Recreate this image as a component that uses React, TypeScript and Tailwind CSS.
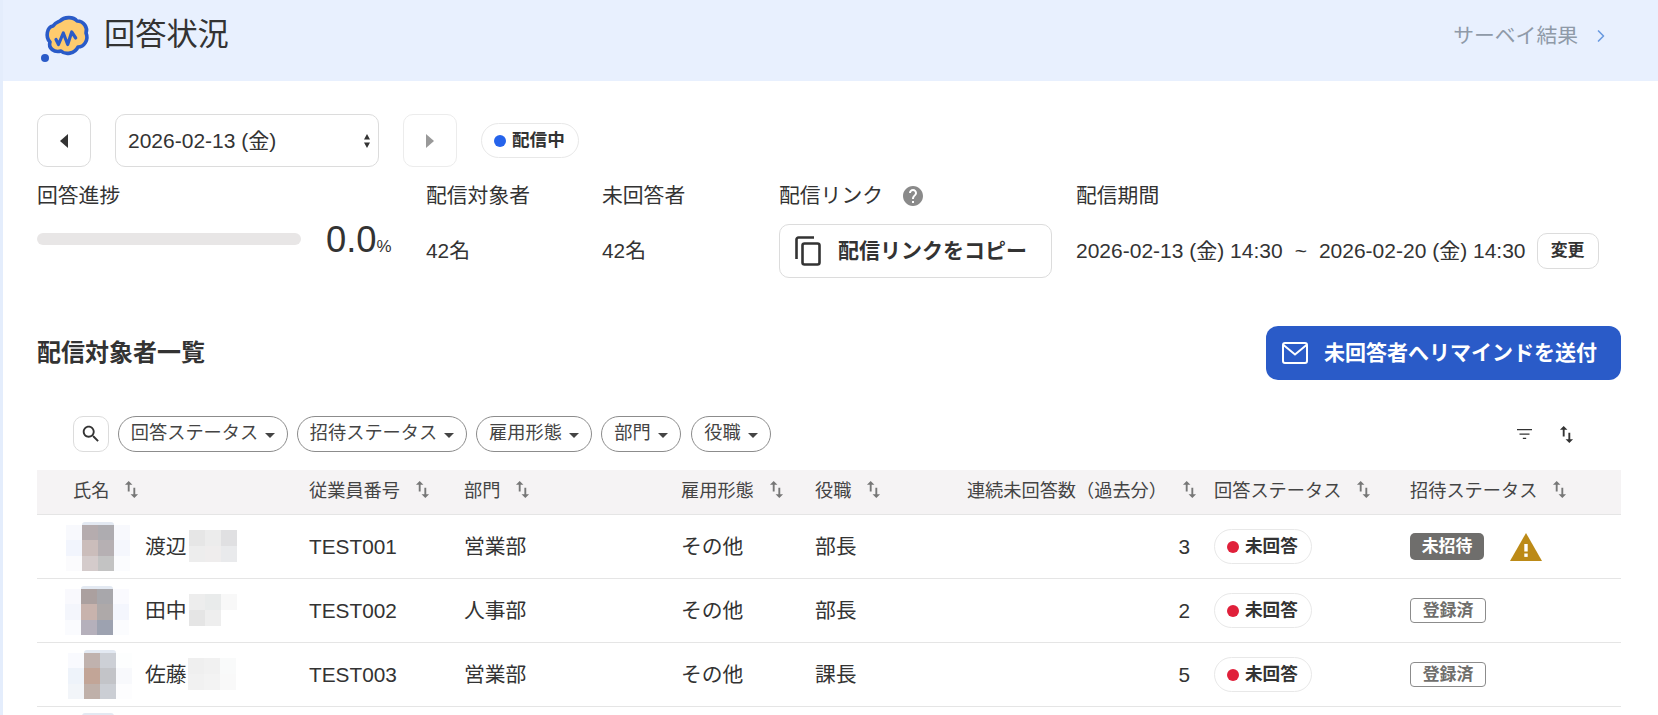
import { ChevronRight } from 'lucide-react';

const font = { fontFamily: '"Liberation Sans", "Noto Sans CJK JP", sans-serif' };

// 回答者データ（写真・名前はモザイク表現）
const respondents = [
  {
    id: 'TEST001', family: '渡辺', dept: '営業部', type: 'その他', role: '部長', count: 3, invite: 'none',
    avatarClass: 'ml-[29px]', blurClass: 'ml-[2px]',
    avatar: ['#f8f9fd', '#b5acae', '#aeacb0', '#f8f9fd', '#f2f5fd', '#cbbdbb', '#b6b0b3', '#f5f7fd', '#fbfbfd', '#d4cbcb', '#c3c3c3', '#fbfcfe'],
    blur: ['#e6e6e6', '#ececec', '#e0e0e2', '#ededed', '#efeded', '#e9eaec'],
  },
  {
    id: 'TEST002', family: '田中', dept: '人事部', type: 'その他', role: '部長', count: 2, invite: 'done',
    avatarClass: 'ml-[28px]', blurClass: 'ml-[2px]',
    avatar: ['#f9f9fd', '#aba09f', '#a8a7ab', '#fafafe', '#f4f6fc', '#c8b3ad', '#aea9a9', '#f4f6fd', '#fafbfe', '#b5b0bb', '#9da2b0', '#fbfcfe'],
    blur: ['#ededed', '#e9ebeb', '#f8f8f8', '#e5e5e5', '#eeeeee', '#ffffff'],
  },
  {
    id: 'TEST003', family: '佐藤', dept: '営業部', type: 'その他', role: '課長', count: 5, invite: 'done',
    avatarClass: 'ml-[31px]', blurClass: 'ml-[1px]',
    avatar: ['#f9fafe', '#c0b2ae', '#cdd0d6', '#fdfefe', '#eef3fa', '#c2a597', '#c3c4c8', '#f8f9fc', '#f2f5f9', '#bfb0a9', '#cbced4', '#fdfdfe'],
    blur: ['#efefef', '#f1f1f1', '#f9fafa', '#f1f1f1', '#f3f3f3', '#f9f9f9'],
  },
];

const rowGrid = 'grid grid-cols-[272px_155px_217px_134px_151px_248px_196px_211px] items-center';

function SortIcon({ className }: { className: string }) {
  return (
    <svg viewBox="4 2 16 20" className={className} fill="currentColor">
      <path d="M16 17.01V10h-2v7.01h-3L15 21l4-3.99h-3zM9 3L5 6.99h3V14h2V6.99h3L9 3z" />
    </svg>
  );
}

function Caret() {
  return (
    <svg viewBox="0 0 10 5" className="w-[10px] h-[5px] ml-[7px] mt-[2px] text-[#444]" fill="currentColor">
      <path d="M0 0h10L5 5z" />
    </svg>
  );
}

function FilterChip({ label, className }: { label: string; className: string }) {
  return (
    <div className={`h-[36px] rounded-full border border-[#8c8c8c] flex items-center justify-center text-[18.2px] text-[#444] ${className}`}>
      {label}
      <Caret />
    </div>
  );
}

function HeadCell({ label, className = '' }: { label: string; className?: string }) {
  return (
    <div className={`flex items-center gap-[15px] text-[18.2px] text-[#444] ${className}`}>
      <span>{label}</span>
      <SortIcon className="w-[15px] h-[19px] text-[#777] -mt-[5px]" />
    </div>
  );
}

function Avatar({ colors, className }: { colors: string[]; className: string }) {
  return (
    <div className={`flex flex-col items-center w-[64px] ${className}`}>
      <div className="w-[32px] h-[3px] rounded-t-full bg-[#e3e9f2]" />
      <div className="grid grid-cols-4 w-[64px]">
        {colors.map((c, i) => (
          <div key={i} className="h-[15.4px]" style={{ backgroundColor: c }} />
        ))}
      </div>
    </div>
  );
}

function StatusPill({ children, dot }: { children: string; dot: string }) {
  return (
    <div className="inline-flex items-center h-[35px] rounded-full border border-[#e8e8e8] bg-white pl-[12px] pr-[13px] gap-[6px] text-[17.6px] font-bold text-[#333]">
      <span className={`w-[12px] h-[12px] rounded-full ${dot}`} />
      {children}
    </div>
  );
}

export default function App() {
  return (
    <div style={font} className="w-[1658px] h-[715px] overflow-hidden bg-white border-l-[3px] border-[#e4edfc] text-[#333]">
      {/* ヘッダー */}
      <div className="h-[81px] -ml-[3px] bg-[#e8f0fe] flex items-center justify-between pl-[40px] pr-[47px]">
        <div className="flex items-center gap-[12px]">
          <svg viewBox="0 0 52 50" className="w-[52px] h-[50px] -mt-[6px]">
            <path
              d="M20 8C24 4 33 3 37 8C44 8 48 15 46 20C49 27 44 34 38 34C35 41 25 42 21 38C14 40 8 35 10 29C5 24 7 14 13 13C15 10 18 9 20 8Z"
              fill="#fecb6e"
              stroke="#2a5bc8"
              strokeWidth="3.6"
              strokeLinejoin="round"
            />
            <path d="M16 26.5L18.5 31.5L23.3 20L27.7 31.5L31.7 19L35.7 25" fill="none" stroke="#2a5bc8" strokeWidth="3.2" strokeLinejoin="round" strokeLinecap="round" />
            <circle cx="5" cy="45" r="4" fill="#2a5bc8" />
          </svg>
          <h1 className="text-[31.2px] text-[#333] -mt-[10px]">回答状況</h1>
        </div>
        <div className="flex items-center gap-[13px] text-[20.8px] text-[#8f9aa8] -mt-[10px]">
          サーベイ結果
          <ChevronRight className="w-[20px] h-[20px] text-[#6a9be0]" strokeWidth={2} />
        </div>
      </div>

      <div className="pt-[33px] pl-[34px] pr-[37px]">
        {/* 日付セレクタ */}
        <div className="flex items-center">
          <button className="w-[54px] h-[53px] rounded-[10px] border border-[#dcdcdc] bg-white flex items-center justify-center">
            <svg viewBox="0 0 8 14" className="w-[8px] h-[14px]" fill="#333"><path d="M8 0v14L0 7z" /></svg>
          </button>
          <div className="w-[264px] h-[53px] ml-[24px] rounded-[10px] border border-[#dcdcdc] bg-white flex items-center justify-between pl-[12px] pr-[8px] text-[21px]">
            2026-02-13 (金)
            <svg viewBox="0 0 6 14" className="w-[6px] h-[14px]" fill="#333"><path d="M3 0l3 5.5H0zM3 14l-3-5.5h6z" /></svg>
          </div>
          <button className="w-[54px] h-[53px] ml-[24px] rounded-[10px] border border-[#ececec] bg-white flex items-center justify-center">
            <svg viewBox="0 0 8 14" className="w-[8px] h-[14px]" fill="#999"><path d="M0 0v14L8 7z" /></svg>
          </button>
          <div className="h-[35px] ml-[24px] rounded-full border border-[#e8e8e8] bg-white flex items-center pl-[12px] pr-[13px] gap-[6px] text-[17.6px] font-bold">
            <span className="w-[12px] h-[12px] rounded-full bg-[#2563eb]" />
            配信中
          </div>
        </div>

        {/* サマリー */}
        <div className="flex mt-[15px] text-[20.8px]">
          <div className="w-[389px]">
            <div className="h-[28px] leading-[28px]">回答進捗</div>
            <div className="h-[54px] mt-[14px] flex items-center">
              <div className="w-[264px] h-[12px] rounded-full bg-[#e8e6e6] mb-[24px]" />
              <div className="ml-[25px] flex items-baseline mb-[22px]">
                <span className="text-[36.4px]">0.0</span>
                <span className="text-[16.9px]">%</span>
              </div>
            </div>
          </div>
          <div className="w-[176px]">
            <div className="h-[28px] leading-[28px]">配信対象者</div>
            <div className="h-[54px] mt-[14px] flex items-center">42名</div>
          </div>
          <div className="w-[177px]">
            <div className="h-[28px] leading-[28px]">未回答者</div>
            <div className="h-[54px] mt-[14px] flex items-center">42名</div>
          </div>
          <div className="w-[297px]">
            <div className="h-[28px] flex items-center gap-[18px]">
              配信リンク
              <svg viewBox="0 0 24 24" className="w-[24px] h-[24px]" fill="#8a8a8a">
                <path d="M12 2C6.48 2 2 6.48 2 12s4.48 10 10 10 10-4.48 10-10S17.52 2 12 2zm1 17h-2v-2h2v2zm2.07-7.75l-.9.92C13.45 12.9 13 13.5 13 15h-2v-.5c0-1.1.45-2.1 1.17-2.83l1.24-1.26c.37-.36.59-.86.59-1.41 0-1.1-.9-2-2-2s-2 .9-2 2H8c0-2.21 1.79-4 4-4s4 1.79 4 4c0 .88-.36 1.68-.93 2.25z" />
              </svg>
            </div>
            <button className="w-[273px] h-[54px] mt-[14px] rounded-[10px] border border-[#dcdcdc] bg-white flex items-center pl-[15px] gap-[16px] text-[21px] font-bold">
              <svg viewBox="0 0 27 30" className="w-[27px] h-[30px]" fill="none" stroke="#333" strokeWidth="2.6">
                <path d="M19 1.5H3.5a2 2 0 0 0-2 2V23" />
                <rect x="7.5" y="7.5" width="17" height="21" rx="2" />
              </svg>
              配信リンクをコピー
            </button>
          </div>
          <div>
            <div className="h-[28px] leading-[28px]">配信期間</div>
            <div className="h-[54px] mt-[14px] flex items-center text-[21px]">
              <span>2026-02-13 (金) 14:30</span>
              <span className="mx-[12px]">~</span>
              <span>2026-02-20 (金) 14:30</span>
              <button className="w-[62px] h-[36px] ml-[11px] rounded-[10px] border border-[#dcdcdc] bg-white text-[16.9px] font-bold">変更</button>
            </div>
          </div>
        </div>

        {/* 一覧タイトル */}
        <div className="flex items-center justify-between mt-[48px] h-[54px]">
          <h2 className="text-[24px] font-bold">配信対象者一覧</h2>
          <button className="w-[355px] h-[54px] rounded-[12px] bg-[#2a5bc8] text-white text-[21px] font-bold flex items-center pl-[16px] gap-[16px]">
            <svg viewBox="0 0 26 22" className="w-[26px] h-[22px]" fill="none" stroke="#fff" strokeWidth="2">
              <rect x="1" y="1" width="24" height="20" rx="2" />
              <path d="M1.5 3L13 12.5L24.5 3" />
            </svg>
            未回答者へリマインドを送付
          </button>
        </div>

        {/* フィルター */}
        <div className="flex items-center mt-[36px] pl-[36px] pr-[47px]">
          <div className="w-[36px] h-[36px] rounded-[10px] border border-[#dcdcdc] flex items-center justify-center">
            <svg viewBox="0 0 24 24" className="w-[22px] h-[22px]" fill="#333">
              <path d="M15.5 14h-.79l-.28-.27C15.41 12.59 16 11.11 16 9.5 16 5.91 13.09 3 9.5 3S3 5.91 3 9.5 5.91 16 9.5 16c1.61 0 3.09-.59 4.23-1.57l.27.28v.79l5 4.99L20.49 19l-4.99-5zm-6 0C7.01 14 5 11.99 5 9.5S7.01 5 9.5 5 14 7.01 14 9.5 11.99 14 9.5 14z" />
            </svg>
          </div>
          <FilterChip label="回答ステータス" className="w-[170px] ml-[9px]" />
          <FilterChip label="招待ステータス" className="w-[170px] ml-[9px]" />
          <FilterChip label="雇用形態" className="w-[116px] ml-[9px]" />
          <FilterChip label="部門" className="w-[80px] ml-[9px]" />
          <FilterChip label="役職" className="w-[80px] ml-[10px]" />
          <div className="ml-auto flex items-center gap-[27px]">
            <svg viewBox="3 6 18 12" className="w-[15px] h-[12px]" fill="#333">
              <path d="M10 18h4v-1.5h-4V18zM3 6v1.5h18V6H3zm3 7h12v-1.5H6V13z" />
            </svg>
            <SortIcon className="w-[15px] h-[19px] text-[#333]" />
          </div>
        </div>

        {/* テーブル */}
        <div className="mt-[18px]">
          <div className={`${rowGrid} h-[45px] bg-[#f5f3f4] border-b border-[#e5e5e5]`}>
            <HeadCell label="氏名" className="pl-[36px]" />
            <HeadCell label="従業員番号" />
            <HeadCell label="部門" />
            <HeadCell label="雇用形態" />
            <HeadCell label="役職" />
            <HeadCell label="連続未回答数（過去分）" className="justify-end pr-[17px] whitespace-nowrap" />
            <HeadCell label="回答ステータス" />
            <HeadCell label="招待ステータス" />
          </div>

          {respondents.map((r) => (
            <div key={r.id} className={`${rowGrid} h-[64px] border-b border-[#e5e5e5] text-[20.8px]`}>
              <div className="flex items-center">
                <div className="w-[108px]">
                  <Avatar colors={r.avatar} className={r.avatarClass} />
                </div>
                <span>{r.family}</span>
                <div className={`grid grid-cols-3 w-[48px] ${r.blurClass}`}>
                  {r.blur.map((c, i) => (
                    <div key={i} className="h-[16px]" style={{ backgroundColor: c }} />
                  ))}
                </div>
              </div>
              <div>{r.id}</div>
              <div>{r.dept}</div>
              <div>{r.type}</div>
              <div>{r.role}</div>
              <div className="text-right pr-[24px]">{r.count}</div>
              <div>
                <StatusPill dot="bg-[#e0203a]">未回答</StatusPill>
              </div>
              <div className="flex items-center">
                {r.invite === 'none' ? (
                  <>
                    <span className="w-[74px] h-[27px] rounded-[5px] bg-[#6f6e6c] text-white text-[16.9px] font-bold flex items-center justify-center">未招待</span>
                    <svg viewBox="0 0 32 28" className="w-[32px] h-[28px] ml-[26px]">
                      <path d="M16 0L32 28H0z" fill="#bc8a17" />
                      <rect x="14.3" y="11" width="3.4" height="7.5" fill="#fff" />
                      <rect x="14.3" y="20.5" width="3.4" height="3.4" fill="#fff" />
                    </svg>
                  </>
                ) : (
                  <span className="w-[76px] h-[25px] rounded-[4px] border border-[#8c8c8c] text-[#6f6e6c] text-[16.9px] font-bold flex items-center justify-center">登録済</span>
                )}
              </div>
            </div>
          ))}

          {/* 4行目の見切れ */}
          <div className="pl-[45px] pt-[6px]">
            <div className="w-[32px] h-[3px] rounded-t-full bg-[#e3e9f2]" />
          </div>
        </div>
      </div>
    </div>
  );
}
